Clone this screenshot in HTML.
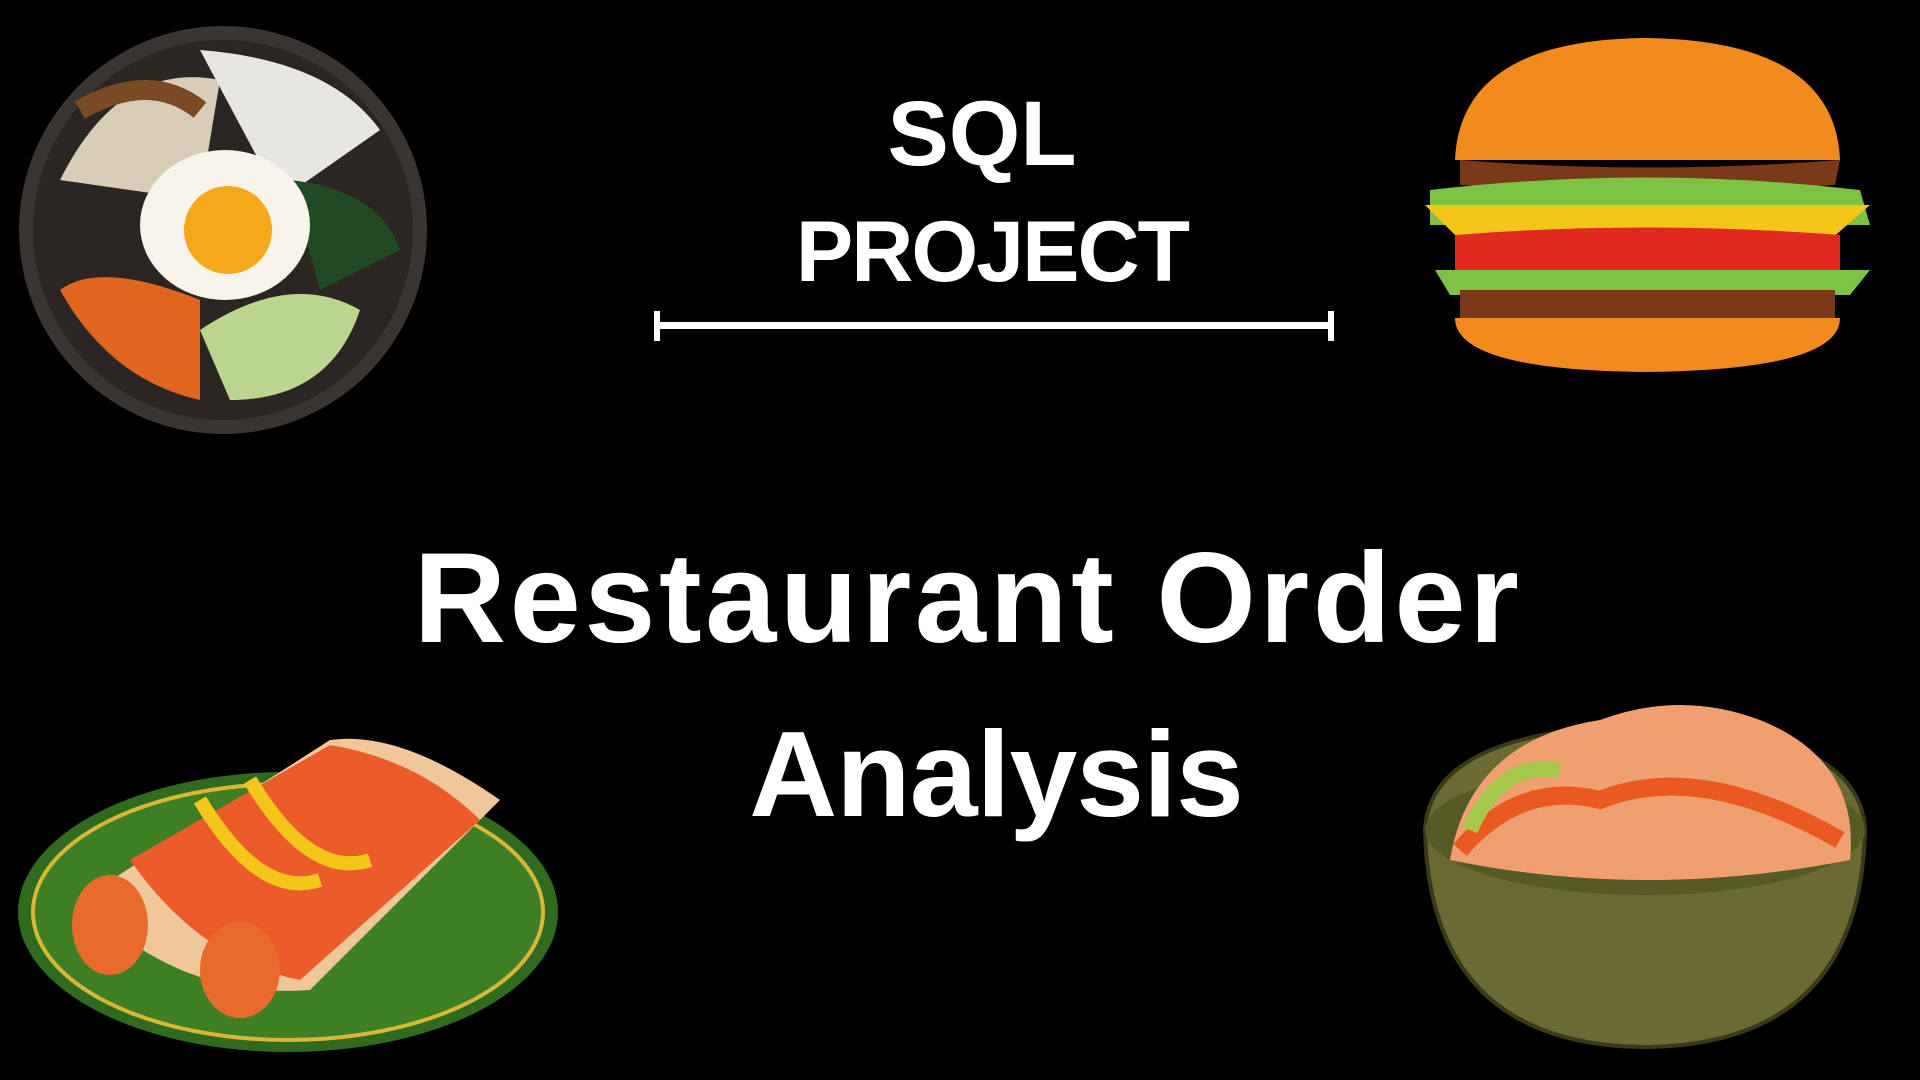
<!DOCTYPE html>
<html><head><meta charset="utf-8"><style>
html,body{margin:0;padding:0;background:#000;width:1920px;height:1080px;overflow:hidden;position:relative;font-family:"Liberation Sans",sans-serif;color:#fff}
.t{position:absolute;left:0;width:1920px;text-align:center;font-weight:bold;white-space:nowrap}
svg{position:absolute;left:0;top:0}
</style></head><body>
<div class="t" style="top:82px;font-size:92px;left:22px">SQL</div>
<div class="t" style="top:203px;font-size:86px;left:32px;letter-spacing:-2px">PROJECT</div>
<div class="t" style="top:525px;font-size:128px;left:8px;letter-spacing:3.5px">Restaurant Order</div>
<div class="t" style="top:704px;font-size:122px;left:36px;letter-spacing:-1px">Analysis</div>
<svg width="1920" height="1080" viewBox="0 0 1920 1080">
<rect x="656" y="322" width="676" height="7" fill="#fff"/>
<rect x="654" y="311" width="6" height="30" fill="#fff"/>
<rect x="1328" y="311" width="6" height="30" fill="#fff"/>
<circle cx="223" cy="230" r="204" fill="#3a3530"/>
<circle cx="223" cy="230" r="190" fill="#2b2622"/>
<path d="M60 180 Q120 60 220 80 L200 200 Z" fill="#d8cdb8"/>
<path d="M200 50 Q330 60 380 130 L280 200 Z" fill="#e8e6e0"/>
<path d="M290 180 Q380 190 400 250 L320 290 Z" fill="#1f4a22"/>
<path d="M60 290 Q100 260 200 300 L200 400 Q110 380 60 290 Z" fill="#e0661f"/>
<path d="M200 330 Q290 270 360 310 Q330 400 230 400 Z" fill="#bcd68f"/>
<ellipse cx="225" cy="225" rx="85" ry="75" fill="#f7f4ec"/>
<circle cx="228" cy="230" r="44" fill="#f4a81a"/>
<path d="M80 110 Q150 70 200 110" stroke="#7a4a22" stroke-width="20" fill="none"/>
<path d="M1455 160 Q1460 40 1645 38 Q1835 40 1840 160 Z" fill="#f28a1c"/>
<path d="M1460 160 Q1645 175 1840 160 L1835 185 Q1645 195 1460 185 Z" fill="#7a3a1a"/>
<path d="M1430 190 Q1645 165 1860 190 L1870 225 L1430 225 Z" fill="#7cc243"/>
<path d="M1425 205 L1870 205 L1830 240 L1460 240 Z" fill="#f5c61a"/>
<path d="M1455 235 Q1645 220 1840 235 L1840 275 Q1645 285 1455 275 Z" fill="#e02a1f"/>
<path d="M1435 270 L1870 270 L1850 295 L1450 295 Z" fill="#7cc243"/>
<path d="M1460 290 L1835 290 L1835 320 L1460 320 Z" fill="#7a3a1a"/>
<path d="M1455 318 L1840 318 Q1840 370 1645 372 Q1455 370 1455 318 Z" fill="#f28a1c"/>
<ellipse cx="288" cy="912" rx="270" ry="140" fill="#2f6a1f"/>
<ellipse cx="288" cy="912" rx="255" ry="128" fill="#3f7f24" stroke="#d8b636" stroke-width="4"/>
<path d="M80 900 L330 740 Q400 730 500 800 L310 990 Q180 1000 80 900 Z" fill="#f0c79a"/>
<path d="M130 860 L330 745 Q420 760 480 820 L300 980 Q200 960 130 860 Z" fill="#ec5c2a"/>
<path d="M200 800 Q260 900 320 880 M250 780 Q310 880 370 860" stroke="#f5c61a" stroke-width="14" fill="none"/>
<ellipse cx="110" cy="925" rx="38" ry="50" fill="#e86b2c"/>
<ellipse cx="240" cy="970" rx="40" ry="48" fill="#e86b2c"/>
<path d="M1425 830 Q1430 730 1645 725 Q1860 730 1865 830 Q1860 1045 1645 1047 Q1430 1045 1425 830 Z" fill="#6b6a33" stroke="#3a3a1a" stroke-width="4"/>
<ellipse cx="1645" cy="830" rx="220" ry="65" fill="#565a26"/>
<path d="M1450 860 Q1470 740 1600 720 Q1680 690 1760 720 Q1860 760 1850 860 Q1645 900 1450 860 Z" fill="#f0a070"/>
<path d="M1460 850 Q1520 780 1600 800 Q1700 760 1840 840" stroke="#e85a20" stroke-width="18" fill="none"/>
<path d="M1470 830 Q1500 760 1560 770" stroke="#a7c84a" stroke-width="16" fill="none"/>
</svg>
</body></html>
